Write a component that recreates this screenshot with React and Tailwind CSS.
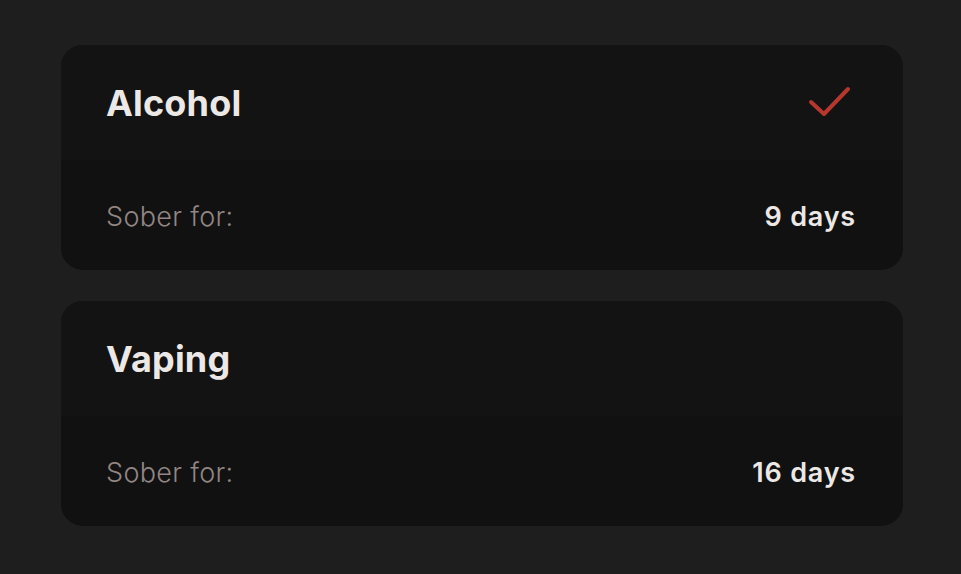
import React from 'react';

const habits = [
  { name: 'Alcohol', days: 9, done: true },
  { name: 'Vaping', days: 16, done: false },
];

const Check = () => (
  <svg width="44" height="34" viewBox="0 0 44 34" fill="none" className="mr-[4px]">
    <path d="M3 16 L16 28 L40 3" stroke="#b5372e" strokeWidth="4" strokeLinecap="round" strokeLinejoin="round" />
  </svg>
);

const HabitCard = ({ name, days, done }) => (
  <div className="w-[842px] rounded-[22px] overflow-hidden bg-[#111111]">
    {/* header */}
    <div className="h-[115px] bg-[#131313] pl-[45px] pr-[47px] flex items-center justify-between">
      <span className="text-[36px] font-bold text-[#ebe8e6] leading-none tracking-[0.005em]">{name}</span>
      {done && <Check />}
    </div>
    {/* body */}
    <div className="h-[110px] pl-[45px] pr-[47px] pt-[3px] flex items-center justify-between">
      <span className="text-[27px] font-light text-[#918684] leading-none tracking-[0.012em]">Sober for:</span>
      <span className="text-[27px] font-semibold text-[#ebe8e6] leading-none tracking-[0.03em]">
        {days} days
      </span>
    </div>
  </div>
);

export default function App() {
  return (
    <div
      className="w-full min-h-[574px] bg-[#1e1e1e] pt-[45px] pl-[61px] flex flex-col gap-[31px]"
      style={{ fontFamily: 'Inter, "Noto Sans", sans-serif' }}
    >
      {habits.map((h) => (
        <HabitCard key={h.name} {...h} />
      ))}
    </div>
  );
}
